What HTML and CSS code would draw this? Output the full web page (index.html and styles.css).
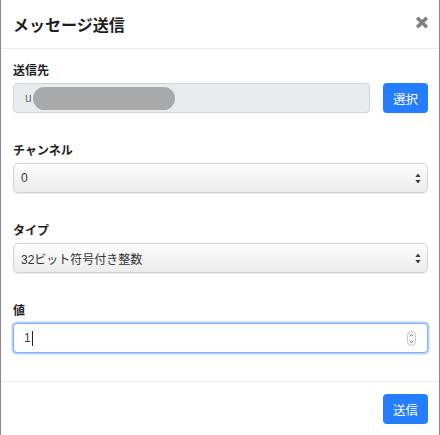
FILE: index.html
```html
<!DOCTYPE html>
<html lang="ja">
<head>
<meta charset="utf-8">
<title>メッセージ送信</title>
<link rel="stylesheet" href="styles.css">
</head>
<body>
<div class="modal">
  <div class="modal-header">
    <h1 class="title">メッセージ送信</h1>
    <span class="close" aria-label="閉じる">
      <svg width="14" height="13" viewBox="0 0 14 13"><path d="M2.2 1.8 L11.8 11.2 M11.8 1.8 L2.2 11.2" stroke="#7f7f7f" stroke-width="3.6" stroke-linecap="butt"/></svg>
    </span>
  </div>
  <div class="modal-body">
    <div class="group">
      <div class="label">送信先</div>
      <div class="row">
        <div class="field readonly"><span class="txt">u</span><span class="redact"></span></div>
        <div class="btn">選択</div>
      </div>
    </div>
    <div class="group">
      <div class="label">チャンネル</div>
      <div class="field select"><span class="txt">0</span>
        <svg class="arrows" width="6" height="11" viewBox="0 0 6 11"><path d="M3 0.5 L5.6 4 L0.4 4 Z M3 10.5 L5.6 7 L0.4 7 Z" fill="#3a3a3a"/></svg>
      </div>
    </div>
    <div class="group">
      <div class="label">タイプ</div>
      <div class="field select"><span class="txt">32ビット符号付き整数</span>
        <svg class="arrows" width="6" height="11" viewBox="0 0 6 11"><path d="M3 0.5 L5.6 4 L0.4 4 Z M3 10.5 L5.6 7 L0.4 7 Z" fill="#3a3a3a"/></svg>
      </div>
    </div>
    <div class="group last">
      <div class="label">値</div>
      <div class="field number"><span class="txt">1</span><span class="caret"></span>
        <svg class="spin" width="9" height="15" viewBox="0 0 9 15"><rect x="0.5" y="0.5" width="8" height="14" rx="4" fill="#fff" stroke="#c4c4c4"/><path d="M2.6 5.2 L4.5 3.3 L6.4 5.2 M2.6 9.8 L4.5 11.7 L6.4 9.8" fill="none" stroke="#555" stroke-width="0.9"/></svg>
      </div>
    </div>
  </div>
  <div class="modal-footer">
    <div class="btn">送信</div>
  </div>
</div>
</body>
</html>
```
FILE: styles.css
```css
html, body {
  margin: 0;
  padding: 0;
  background: #fff;
}
body {
  font-family: "Liberation Sans", "Noto Sans CJK JP", sans-serif;
  color: #212529;
}
.modal {
  width: 438px;
  height: 435px;
  border-left: 1px solid #8a8a8a;
  border-right: 1px solid #8a8a8a;
  background: #fff;
  display: flex;
  flex-direction: column;
}
.modal-header {
  height: 48px;
  border-bottom: 1px solid #e9ecef;
  display: flex;
  align-items: center;
  justify-content: space-between;
  padding: 0 11px 0 12px;
}
.title {
  margin: 0;
  font-size: 16px;
  font-weight: 700;
  line-height: 20px;
  font-family: "Noto Sans CJK JP", sans-serif;
  color: #1e1e1e;
  margin-top: -1px;
}
.close {
  display: flex;
  margin-top: -4px;
  margin-right: -1px;
}
.modal-body {
  padding: 12px 11px 28px 12px;
  border-bottom: 1px solid #e9ecef;
}
.group {
  margin-bottom: 28px;
}
.group.last {
  margin-bottom: 0;
}
.label {
  font-family: "Noto Sans CJK JP", sans-serif;
  font-size: 12px;
  font-weight: 700;
  line-height: 18px;
  margin-bottom: 4px;
  color: #1e1e1e;
}
.row {
  display: flex;
  gap: 13px;
}
.field {
  height: 30px;
  box-sizing: border-box;
  border-radius: 4px;
  display: flex;
  align-items: center;
  font-size: 12px;
  color: #495057;
  font-family: "Liberation Sans", "Noto Sans CJK JP", sans-serif;
}
.readonly {
  flex: 1;
  background: #e9ecef;
  border: 1px solid #ced4da;
  padding-left: 11px;
}
.readonly .txt {
  color: #6c6c6c;
}
.redact {
  display: block;
  width: 142px;
  height: 23px;
  border-radius: 12px;
  background: #a9a9a9;
  margin-left: 1px;
}
.select {
  border: 1px solid #d4d4d4;
  background: linear-gradient(#fdfdfd, #ececec);
  box-shadow: 0 1px 1px rgba(0,0,0,0.08);
  padding: 0 6px 0 7px;
  justify-content: space-between;
  border-radius: 5px;
}
.select .txt {
  color: #333;
}
.arrows {
  display: block;
}
.number {
  border: 1px solid #7fb2f6;
  box-shadow: 0 0 0 1.5px #b4d2fb;
  padding: 0 11px 0 10px;
  background: #fff;
  color: #333;
}
.number .txt {
  color: #444;
}
.caret {
  display: block;
  width: 1px;
  height: 15px;
  background: #222;
  margin-left: 1px;
}
.spin {
  display: block;
  margin-left: auto;
}
.btn {
  width: 45px;
  height: 30px;
  box-sizing: border-box;
  background: #257dff;
  border-radius: 4px;
  color: #fff;
  font-family: "Noto Sans CJK JP", sans-serif;
  font-size: 12.5px;
  display: flex;
  align-items: center;
  justify-content: center;
}
.modal-footer {
  display: flex;
  justify-content: flex-end;
  padding: 12px 11px 0 12px;
}
```
